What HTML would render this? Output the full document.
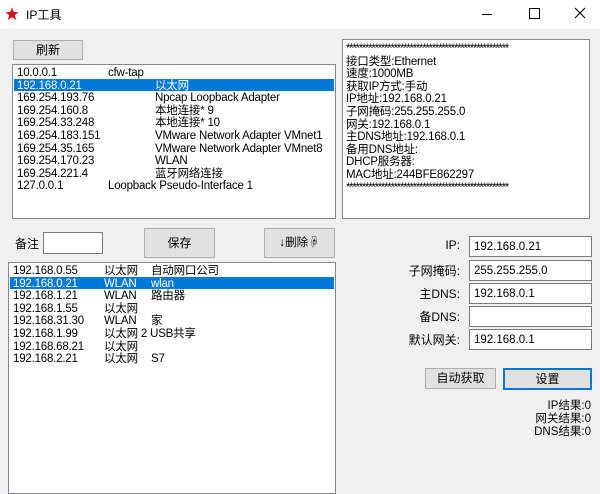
<!DOCTYPE html><html><head><meta charset="utf-8"><style>
*{margin:0;padding:0;box-sizing:border-box}
body{width:600px;height:491px;background:#f0f0f0;font-family:"Liberation Sans","Noto Sans CJK SC",sans-serif;font-size:12px;color:#000;position:relative;overflow:hidden}
.a{position:absolute}
.tb{left:0;top:0;width:600px;height:29px;background:#fff}
.btn{position:absolute;background:#e1e1e1;border:1px solid #adadad;text-align:center;font-size:12px}
.box{position:absolute;background:#fff;border:1px solid #828790}
.row{height:12.6px;line-height:12.6px;white-space:nowrap;position:relative;font-size:11.5px;letter-spacing:-0.2px}
.row span{position:absolute;top:1px}
.sel{background:#0078d7;color:#fff}
.inp{position:absolute;background:#fff;border:1px solid #7a7a7a;height:21px;line-height:21px;padding-left:4px;width:123px;left:469px;font-size:11.5px}
.lbl{position:absolute;right:140px;text-align:right;font-size:12px}
.res{position:absolute;right:9px;text-align:right;line-height:13px;font-size:11.5px}
.tx div{height:12.6px}
</style></head><body>
<div class="a tb"></div>
<svg class="a" style="left:5px;top:7px" width="14" height="14" viewBox="0 0 14 14"><polygon points="7,0.5 8.8,5 13.5,5.2 9.8,8.2 11.2,13 7,10.3 2.8,13 4.2,8.2 0.5,5.2 5.2,5" fill="#d0101a"/></svg>
<div class="a" style="left:26px;top:6px;font-size:12px">IP工具</div>
<div class="a" style="left:482px;top:14px;width:10px;height:1px;background:#000"></div>
<div class="a" style="left:529px;top:8px;width:11px;height:11px;border:1px solid #000"></div>
<svg class="a" style="left:574px;top:7px" width="12" height="12"><path d="M1 1L11 11M11 1L1 11" stroke="#000" stroke-width="1.1"/></svg>

<div class="btn" style="left:13px;top:40px;width:70px;height:20px;line-height:18px">刷新</div>
<div class="box" style="left:12px;top:64px;width:324px;height:155px;padding:1px 1px">
<div class="row"><span style="left:3px">10.0.0.1</span><span style="left:94px">cfw-tap</span></div>
<div class="row sel"><span style="left:3px">192.168.0.21</span><span style="left:141px">以太网</span></div>
<div class="row"><span style="left:3px">169.254.193.76</span><span style="left:141px">Npcap Loopback Adapter</span></div>
<div class="row"><span style="left:3px">169.254.160.8</span><span style="left:141px">本地连接* 9</span></div>
<div class="row"><span style="left:3px">169.254.33.248</span><span style="left:141px">本地连接* 10</span></div>
<div class="row"><span style="left:3px">169.254.183.151</span><span style="left:141px">VMware Network Adapter VMnet1</span></div>
<div class="row"><span style="left:3px">169.254.35.165</span><span style="left:141px">VMware Network Adapter VMnet8</span></div>
<div class="row"><span style="left:3px">169.254.170.23</span><span style="left:141px">WLAN</span></div>
<div class="row"><span style="left:3px">169.254.221.4</span><span style="left:141px">蓝牙网络连接</span></div>
<div class="row"><span style="left:3px">127.0.0.1</span><span style="left:94px">Loopback Pseudo-Interface 1</span></div>
</div>
<div class="box tx" style="left:342px;top:39px;width:248px;height:180px;padding:3px 3px;line-height:12.6px;white-space:nowrap;font-size:11.5px;letter-spacing:-0.2px">
<div style="letter-spacing:-1.3px">***************************************************</div>
<div>接口类型:Ethernet</div><div>速度:1000MB</div><div>获取IP方式:手动</div><div>IP地址:192.168.0.21</div><div>子网掩码:255.255.255.0</div><div>网关:192.168.0.1</div><div>主DNS地址:192.168.0.1</div><div>备用DNS地址:</div><div>DHCP服务器:</div><div>MAC地址:244BFE862297</div>
<div style="letter-spacing:-1.3px">***************************************************</div>
</div>

<div class="a" style="left:15px;top:235px">备注</div>
<div class="a" style="left:43px;top:232px;width:60px;height:22px;background:#fff;border:1px solid #7a7a7a"></div>
<div class="btn" style="left:144px;top:228px;width:71px;height:30px;line-height:28px">保存</div>
<div class="btn" style="left:264px;top:228px;width:71px;height:30px;line-height:28px;font-size:11.5px">↓删除☟</div>

<div class="box" style="left:8px;top:262px;width:328px;height:232px;padding:1px 1px">
<div class="row"><span style="left:3px">192.168.0.55</span><span style="left:94px">以太网</span><span style="left:141px">自动网口公司</span></div>
<div class="row sel"><span style="left:3px">192.168.0.21</span><span style="left:94px">WLAN</span><span style="left:141px">wlan</span></div>
<div class="row"><span style="left:3px">192.168.1.21</span><span style="left:94px">WLAN</span><span style="left:141px">路由器</span></div>
<div class="row"><span style="left:3px">192.168.1.55</span><span style="left:94px">以太网</span></div>
<div class="row"><span style="left:3px">192.168.31.30</span><span style="left:94px">WLAN</span><span style="left:141px">家</span></div>
<div class="row"><span style="left:3px">192.168.1.99</span><span style="left:94px">以太网 2 USB共享</span></div>
<div class="row"><span style="left:3px">192.168.68.21</span><span style="left:94px">以太网</span></div>
<div class="row"><span style="left:3px">192.168.2.21</span><span style="left:94px">以太网</span><span style="left:141px">S7</span></div>
</div>

<div class="lbl" style="top:238px">IP:</div><div class="inp" style="top:236px">192.168.0.21</div>
<div class="lbl" style="top:262px">子网掩码:</div><div class="inp" style="top:260px">255.255.255.0</div>
<div class="lbl" style="top:285px">主DNS:</div><div class="inp" style="top:283px">192.168.0.1</div>
<div class="lbl" style="top:308px">备DNS:</div><div class="inp" style="top:306px"></div>
<div class="lbl" style="top:331px">默认网关:</div><div class="inp" style="top:329px">192.168.0.1</div>

<div class="btn" style="left:425px;top:368px;width:71px;height:21px;line-height:19px">自动获取</div>
<div class="btn" style="left:503px;top:368px;width:89px;height:22px;line-height:18px;border:2px solid #0078d7">设置</div>
<div class="res" style="top:400px">IP结果:0</div>
<div class="res" style="top:413px">网关结果:0</div>
<div class="res" style="top:426px">DNS结果:0</div>
</body></html>
